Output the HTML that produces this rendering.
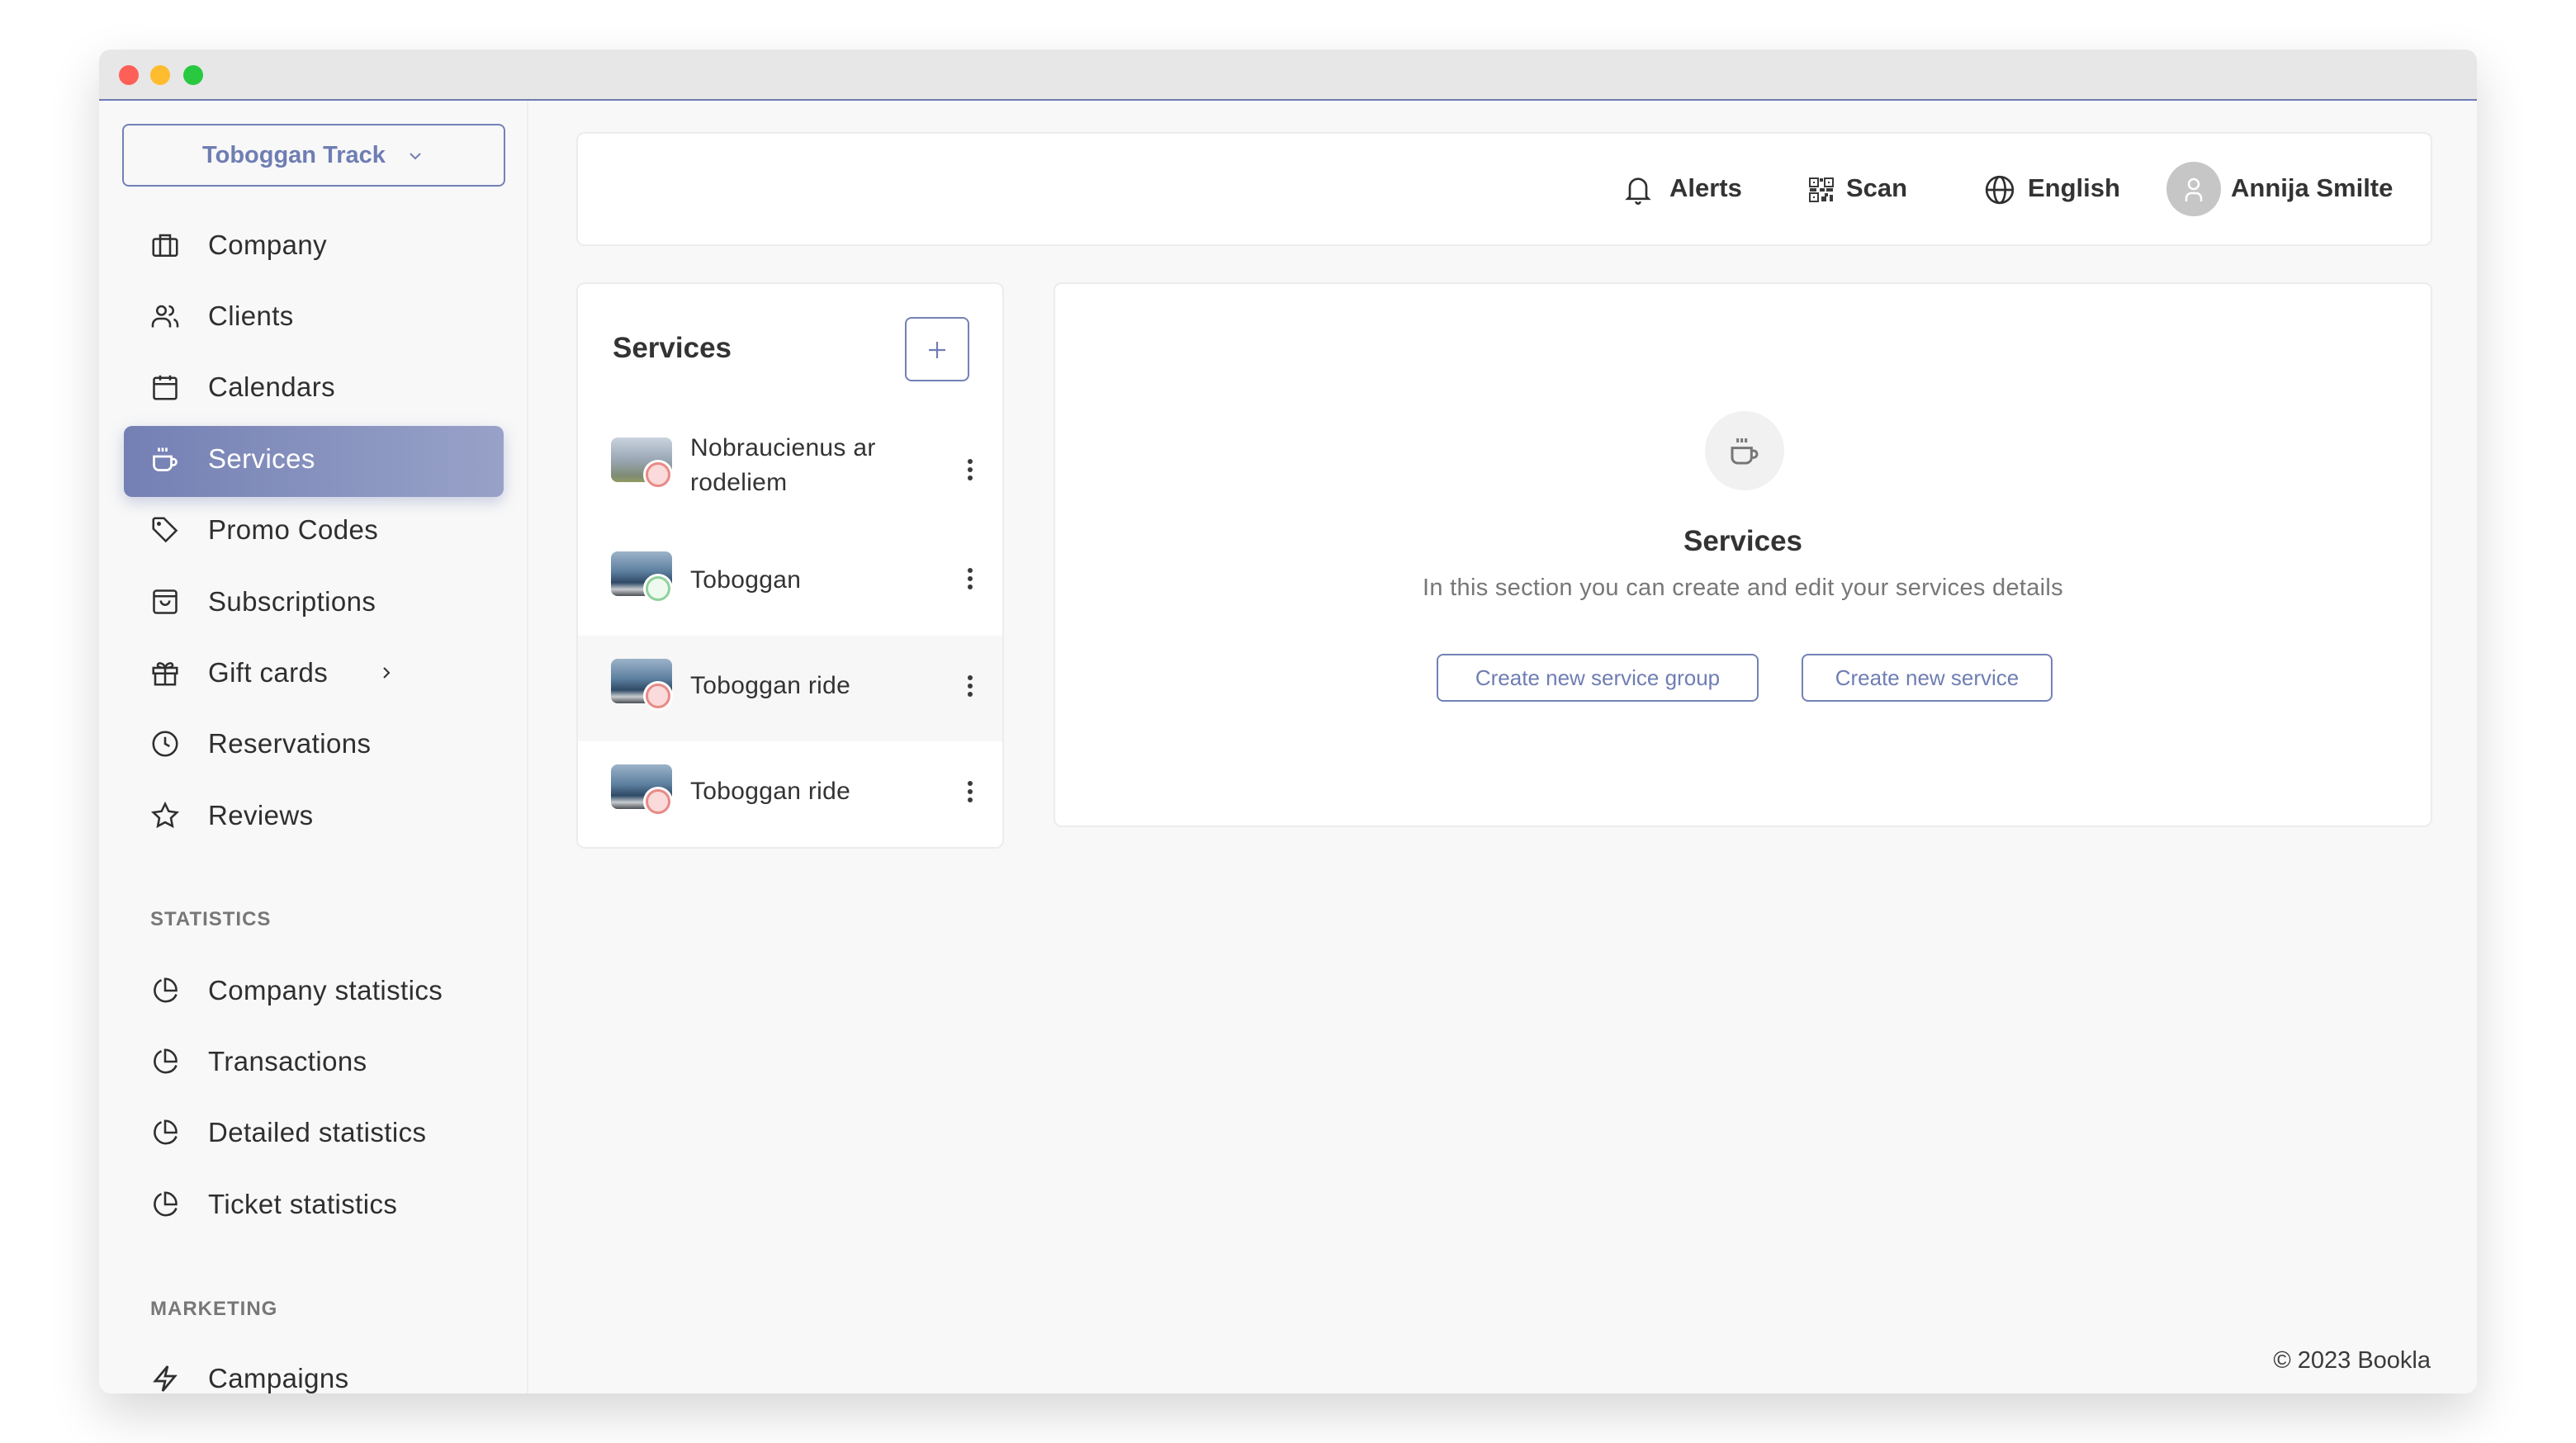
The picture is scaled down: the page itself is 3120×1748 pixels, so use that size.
<!DOCTYPE html>
<html><head><meta charset="utf-8"><style>
*{margin:0;padding:0;box-sizing:border-box}
body{width:3120px;height:1748px;background:#fff;font-family:"Liberation Sans",sans-serif;position:relative;overflow:hidden;color:#2f2f2f}
.win{position:absolute;left:120px;top:60px;width:2880px;height:1628px;border-radius:14px;background:#f8f8f8;box-shadow:0 24px 60px rgba(0,0,0,.16);overflow:hidden}
.tb{position:absolute;left:0;top:0;width:100%;height:62px;background:#e7e7e7;border-bottom:2px solid #6e7bb4}
.dot{position:absolute;top:19px;width:24px;height:24px;border-radius:50%}
.side{position:absolute;left:0;top:62px;width:520px;bottom:0;border-right:2px solid #efeff3}
.a{position:absolute}
.nav{position:absolute;left:132px;font-size:33px;color:#2f2f2f;line-height:40px;letter-spacing:.4px}
.ic{position:absolute;left:62px;width:36px;height:36px}
.sec{position:absolute;left:62px;font-size:24px;color:#777;letter-spacing:1px;font-weight:bold}
.panel{position:absolute;background:#fff;border:2px solid #ececf0;border-radius:10px}
.btn{position:absolute;border:2px solid #7381b6;border-radius:8px;color:#6f7db3;font-size:26px;text-align:center;background:#fff}
.row{position:absolute;left:0;width:516px;height:128px}
.thumb{position:absolute;left:40px;width:74px;height:54px;border-radius:8px;background:linear-gradient(180deg,#9cb3c9 0%,#5d7f9f 45%,#2f4a66 70%,#c9ccd0 85%,#4a4f55 100%)}
.st{position:absolute;width:30px;height:30px;border-radius:50%;border:3px solid #e88a86;background:#fadadb;box-shadow:0 0 0 3px #fff}
.kb{position:absolute;left:472px;width:6px}
.kb i{display:block;width:6px;height:6px;border-radius:50%;background:#3a3a3a;margin-bottom:4px}
.rt{position:absolute;font-size:30px;color:#333;left:136px;letter-spacing:.3px}
</style></head><body>
<div class="win">
<div class="tb">
<div class="dot" style="left:24px;background:#fe5f57"></div>
<div class="dot" style="left:62px;background:#febc2e"></div>
<div class="dot" style="left:102px;background:#28c840"></div>
</div>
<div class="side">
<div class="a" style="left:28px;top:28px;width:464px;height:76px;border:2px solid #7381b6;border-radius:8px;text-align:center;line-height:72px;font-size:29px;font-weight:bold;color:#6f7db3">Toboggan Track <svg width="24" height="24" viewBox="0 0 24 24" style="vertical-align:-4px;margin-left:16px"><path d="M6 9l6 6 6-6" fill="none" stroke="#6f7db3" stroke-width="2"/></svg></div>

<div class="a" style="left:30px;top:394px;width:460px;height:86px;border-radius:10px;background:linear-gradient(90deg,#7480b4,#98a2c8);box-shadow:0 6px 18px rgba(110,123,180,.35)"></div>

<svg class="ic" style="top:157px" viewBox="0 0 24 24" fill="none" stroke="#2f2f2f" stroke-width="1.7"><rect x="2.5" y="7" width="19" height="13.5" rx="1.5"/><path d="M8 7V4h8v3M8 7v13.5M16 7v13.5"/></svg>
<div class="nav" style="top:155px">Company</div>
<svg class="ic" style="top:243px" viewBox="0 0 24 24" fill="none" stroke="#2f2f2f" stroke-width="1.7"><circle cx="9" cy="7.5" r="3.5"/><path d="M2 21v-2a5 5 0 015-5h4a5 5 0 015 5v2M15 4a3.5 3.5 0 010 7M19 14.5a5 5 0 013 4.5v2"/></svg>
<div class="nav" style="top:241px">Clients</div>
<svg class="ic" style="top:329px" viewBox="0 0 24 24" fill="none" stroke="#2f2f2f" stroke-width="1.7"><rect x="3" y="4.5" width="18" height="17" rx="1.5"/><path d="M3 9.5h18M8 2.5v4M16 2.5v4"/></svg>
<div class="nav" style="top:327px">Calendars</div>
<svg class="ic" style="top:416px" viewBox="0 0 24 24" fill="none" stroke="#fff" stroke-width="1.8"><path d="M3 10h14v7a4 4 0 01-4 4H7a4 4 0 01-4-4zM17 12h1.5a2.5 2.5 0 010 5H17M7 3v3M10 3v3M13 3v3"/></svg>
<div class="nav" style="top:414px;color:#fff">Services</div>
<svg class="ic" style="top:502px" viewBox="0 0 24 24" fill="none" stroke="#2f2f2f" stroke-width="1.7"><path d="M2.5 3.5v7.5l10 10 8.5-8.5-10-10H3.5z"/><circle cx="7" cy="7" r=".8" fill="#2f2f2f"/></svg>
<div class="nav" style="top:500px">Promo Codes</div>
<svg class="ic" style="top:589px" viewBox="0 0 24 24" fill="none" stroke="#2f2f2f" stroke-width="1.7"><rect x="3" y="3" width="18" height="18" rx="2"/><path d="M3 7.5h18M8.5 11a3.5 3.5 0 007 0"/></svg>
<div class="nav" style="top:587px">Subscriptions</div>
<svg class="ic" style="top:675px" viewBox="0 0 24 24" fill="none" stroke="#2f2f2f" stroke-width="1.7"><rect x="2.5" y="8" width="19" height="4.5"/><path d="M4 12.5v9h16v-9M12 8v13.5M12 8c-1-4-6-5-6-2 0 1.5 3 2 6 2 3 0 6-.5 6-2 0-3-5-2-6 2"/></svg>
<div class="nav" style="top:673px">Gift cards</div>
<svg class="a" style="left:336px;top:681px" width="24" height="24" viewBox="0 0 24 24"><path d="M9 6l6 6-6 6" fill="none" stroke="#2f2f2f" stroke-width="2"/></svg>
<svg class="ic" style="top:761px" viewBox="0 0 24 24" fill="none" stroke="#2f2f2f" stroke-width="1.7"><circle cx="12" cy="12" r="9.5"/><path d="M12 6.5V12l3.5 2"/></svg>
<div class="nav" style="top:759px">Reservations</div>
<svg class="ic" style="top:848px" viewBox="0 0 24 24" fill="none" stroke="#2f2f2f" stroke-width="1.7"><path d="M12 2.5l2.9 6 6.6.9-4.8 4.6 1.2 6.5L12 17.4l-5.9 3.1 1.2-6.5L2.5 9.4l6.6-.9z"/></svg>
<div class="nav" style="top:846px">Reviews</div>

<div class="sec" style="top:978px">STATISTICS</div>
<svg class="ic" style="top:1060px" viewBox="0 0 24 24" fill="none" stroke="#2f2f2f" stroke-width="1.7"><path d="M9 3.5a9 9 0 1012 11.5"/><path d="M12 2.5a9 9 0 019 9.5h-9z"/></svg>
<div class="nav" style="top:1058px">Company statistics</div>
<svg class="ic" style="top:1146px" viewBox="0 0 24 24" fill="none" stroke="#2f2f2f" stroke-width="1.7"><path d="M9 3.5a9 9 0 1012 11.5"/><path d="M12 2.5a9 9 0 019 9.5h-9z"/></svg>
<div class="nav" style="top:1144px">Transactions</div>
<svg class="ic" style="top:1232px" viewBox="0 0 24 24" fill="none" stroke="#2f2f2f" stroke-width="1.7"><path d="M9 3.5a9 9 0 1012 11.5"/><path d="M12 2.5a9 9 0 019 9.5h-9z"/></svg>
<div class="nav" style="top:1230px">Detailed statistics</div>
<svg class="ic" style="top:1319px" viewBox="0 0 24 24" fill="none" stroke="#2f2f2f" stroke-width="1.7"><path d="M9 3.5a9 9 0 1012 11.5"/><path d="M12 2.5a9 9 0 019 9.5h-9z"/></svg>
<div class="nav" style="top:1317px">Ticket statistics</div>
<div class="sec" style="top:1450px">MARKETING</div>
<svg class="ic" style="top:1530px" viewBox="0 0 24 24" fill="none" stroke="#2f2f2f" stroke-width="1.8"><path d="M14 2L4 14h8l-2 8 10-12h-8z"/></svg>
<div class="nav" style="top:1528px">Campaigns</div>
</div>

<!-- top bar -->
<div class="panel" style="left:578px;top:100px;width:2248px;height:138px">
<svg class="a" style="left:1264px;top:48px" width="40" height="40" viewBox="0 0 24 24" fill="none" stroke="#2f2f2f" stroke-width="1.6"><path d="M6 17V10a6 6 0 0112 0v7l1.5 1.5h-15zM10.5 20.5a1.5 1.5 0 003 0"/></svg>
<div class="a" style="left:1322px;top:48px;font-size:31px;font-weight:bold;color:#333">Alerts</div>
<svg class="a" style="left:1490px;top:52px" width="32" height="32" viewBox="0 0 16 16" fill="#3a3a3a"><rect x="1" y="1" width="5" height="5" fill="none" stroke="#3a3a3a"/><rect x="10" y="1" width="5" height="5" fill="none" stroke="#3a3a3a"/><rect x="1" y="10" width="5" height="5" fill="none" stroke="#3a3a3a"/><rect x="3" y="3" width="1" height="1"/><rect x="12" y="3" width="1" height="1"/><rect x="3" y="12" width="1" height="1"/><rect x="7" y="1" width="2" height="2"/><rect x="7" y="7" width="3" height="2"/><rect x="11" y="7" width="4" height="2"/><rect x="1" y="7" width="4" height="2"/><rect x="10" y="10" width="2" height="2"/><rect x="13" y="11" width="2" height="4"/><rect x="8" y="12" width="3" height="3"/></svg>
<div class="a" style="left:1536px;top:48px;font-size:31px;font-weight:bold;color:#333">Scan</div>
<svg class="a" style="left:1702px;top:48px" width="40" height="40" viewBox="0 0 24 24" fill="none" stroke="#2f2f2f" stroke-width="1.6"><circle cx="12" cy="12" r="9.5"/><ellipse cx="12" cy="12" rx="4" ry="9.5"/><path d="M2.5 12h19"/></svg>
<div class="a" style="left:1756px;top:48px;font-size:31px;font-weight:bold;color:#333">English</div>
<div class="a" style="left:1924px;top:34px;width:66px;height:66px;border-radius:50%;background:#c6c6c6"><svg width="66" height="66" viewBox="0 0 66 66" fill="none" stroke="#fff" stroke-width="2.5"><circle cx="33" cy="27" r="6"/><path d="M24 48v-4a6 6 0 016-6h6a6 6 0 016 6v4"/></svg></div>
<div class="a" style="left:2002px;top:48px;font-size:31px;font-weight:bold;color:#333">Annija Smilte</div>
</div>

<!-- list -->
<div class="panel" style="left:578px;top:282px;width:518px;height:686px;overflow:hidden">
<div class="a" style="left:42px;top:58px;font-size:35px;font-weight:bold;color:#333">Services</div>
<div class="a" style="left:396px;top:40px;width:78px;height:78px;border:2px solid #7381b6;border-radius:8px"><svg width="74" height="74" viewBox="0 0 74 74"><path d="M37 28v20M27 38h20" stroke="#6f7db3" stroke-width="2.2"/></svg></div>
<div class="row" style="top:166px"><div class="thumb" style="top:20px;background:linear-gradient(180deg,#c9d3de,#9aa7b5 50%,#7f8c76 85%,#8f9a62)"></div><div class="st" style="left:82px;top:50px"></div><div class="rt" style="top:12px;line-height:42px">Nobraucienus ar<br>rodeliem</div><div class="kb" style="top:46px"><i></i><i></i><i></i></div></div>
<div class="row" style="top:298px"><div class="thumb" style="top:26px"></div><div class="st" style="left:82px;top:56px;border-color:#8fd19b;background:#eefaf0"></div><div class="rt" style="top:44px">Toboggan</div><div class="kb" style="top:46px"><i></i><i></i><i></i></div></div>
<div class="row" style="top:426px;background:#f7f7f7"><div class="thumb" style="top:28px"></div><div class="st" style="left:82px;top:58px"></div><div class="rt" style="top:44px">Toboggan ride</div><div class="kb" style="top:48px"><i></i><i></i><i></i></div></div>
<div class="row" style="top:554px"><div class="thumb" style="top:28px"></div><div class="st" style="left:82px;top:58px"></div><div class="rt" style="top:44px">Toboggan ride</div><div class="kb" style="top:48px"><i></i><i></i><i></i></div></div>
</div>

<!-- empty state -->
<div class="panel" style="left:1156px;top:282px;width:1670px;height:660px">
<div class="a" style="left:787px;top:154px;width:96px;height:96px;border-radius:50%;background:#f1f1f1"><svg style="margin:28px 0 0 28px" width="40" height="40" viewBox="0 0 24 24" fill="none" stroke="#777" stroke-width="1.8"><path d="M3 10h14v7a4 4 0 01-4 4H7a4 4 0 01-4-4zM17 12h1.5a2.5 2.5 0 010 5H17M7 3v3M10 3v3M13 3v3"/></svg></div>
<div class="a" style="left:0;width:100%;top:292px;text-align:center;font-size:35px;font-weight:bold;color:#333">Services</div>
<div class="a" style="left:0;width:100%;top:352px;text-align:center;font-size:29px;color:#777;letter-spacing:.3px">In this section you can create and edit your services details</div>
<div class="btn" style="left:462px;top:448px;width:390px;height:58px;line-height:54px">Create new service group</div>
<div class="btn" style="left:904px;top:448px;width:304px;height:58px;line-height:54px">Create new service</div>
</div>

<div class="a" style="right:56px;top:1572px;font-size:29px;color:#3a3a3a">© 2023 Bookla</div>
</div>
</body></html>
